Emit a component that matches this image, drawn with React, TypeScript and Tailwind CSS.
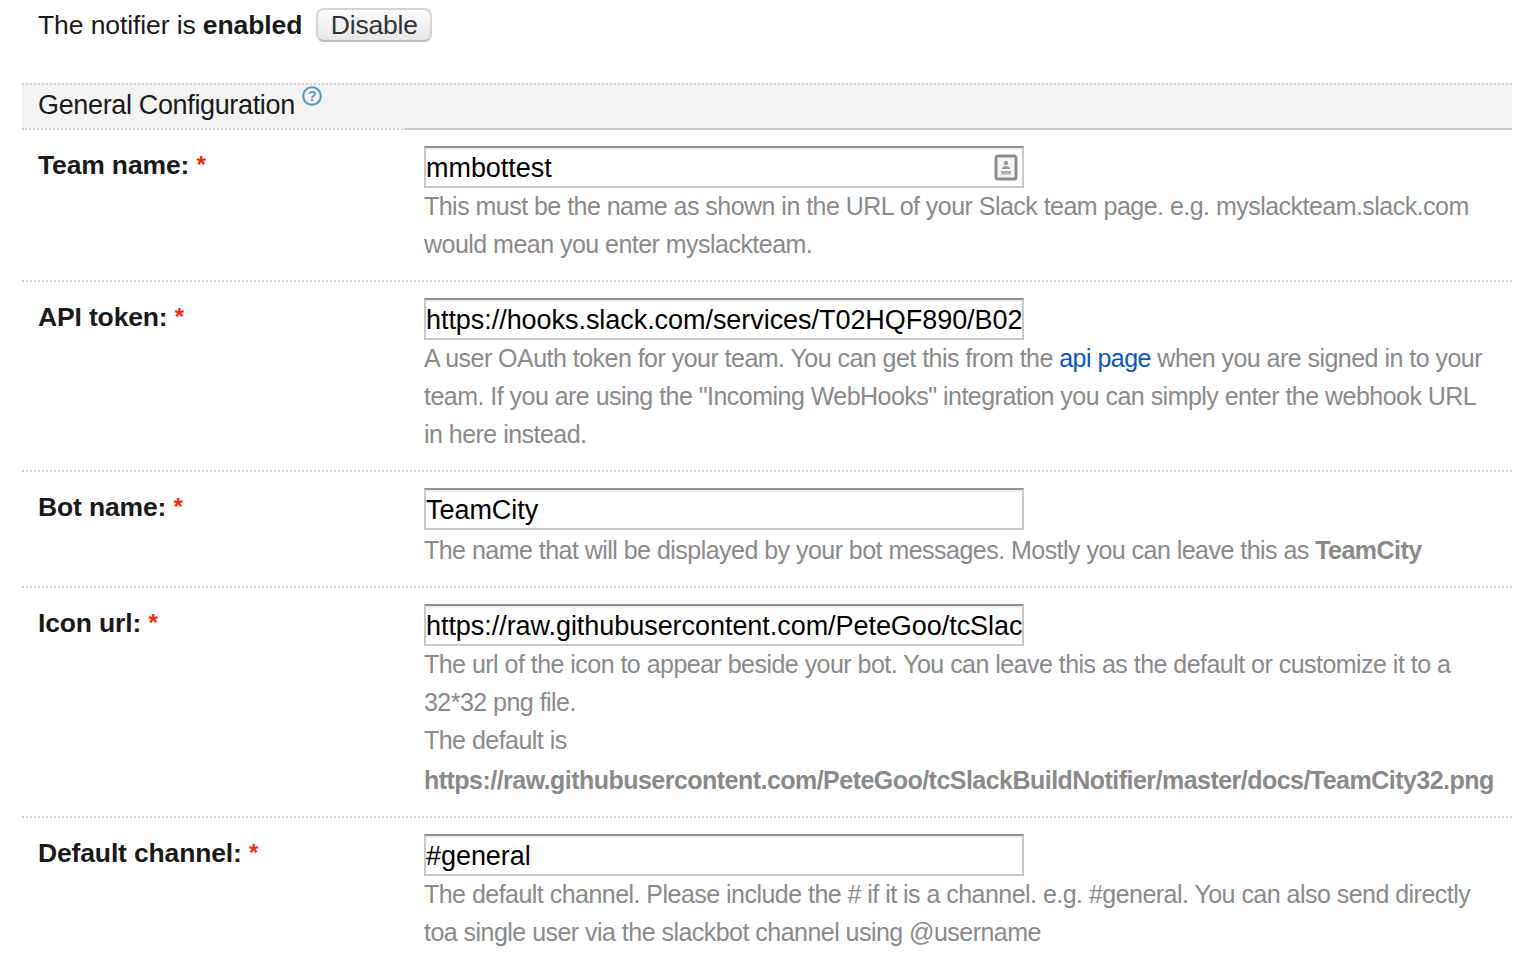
const FONT = "font-['Liberation_Sans',Arial,sans-serif]";

function ContactIcon() {
  return (
    <svg width="24" height="28" viewBox="0 0 24 28" className="absolute right-1 top-1.5">
      <rect x="2" y="2" width="20" height="23" rx="2" fill="#f4f4f4" stroke="#8c8c8c" strokeWidth="3" />
      <circle cx="12" cy="9" r="2.2" fill="#9a9a9a" />
      <path d="M8 15c0-2 2-3 4-3s4 1 4 3z" fill="#9a9a9a" />
      <rect x="7" y="17" width="10" height="3.5" fill="#b0b0b0" />
    </svg>
  );
}

function Field({
  label,
  value,
  icon,
  className,
  hintClass = "-mt-px",
  children,
}: {
  label: string;
  value: string;
  icon?: boolean;
  className: string;
  hintClass?: string;
  children: React.ReactNode;
}) {
  return (
    <div className={`flex border-b-2 border-dotted border-[#cfcfcf] ${className}`}>
      <div className="w-[402px] shrink-0 pl-4 pt-[18px] text-[26.5px] leading-[34px] font-bold tracking-[-0.15px] text-[#1a1a1a]">
        {label} <span className="align-[1px] text-[24px] text-[#f02a10]">*</span>
      </div>
      <div className="min-w-0 flex-1 pt-4">
        <div className="relative h-[42px] w-[600px] overflow-hidden border-2 border-[#c9c9c9] border-t-[#8f8f8f] bg-white text-[27px] leading-[40px] tracking-[-0.05px] whitespace-nowrap text-black shadow-[inset_0_2px_2px_#eeeeee]">
          {value}
          {icon && <ContactIcon />}
        </div>
        <div className={`pr-4 text-[25px] leading-[38px] tracking-[-0.53px] text-[#8a8a8a] ${hintClass}`}>{children}</div>
      </div>
    </div>
  );
}

export default function App() {
  return (
    <div className={`h-[954px] w-[1532px] overflow-hidden bg-white ${FONT}`}>
      <div className="flex h-[83px] items-start gap-[14px] pt-2 pl-[38px] text-[26.5px] tracking-[-0.1px] text-[#1a1a1a]">
        <div className="leading-[34px]">
          The notifier is <b>enabled</b>
        </div>
        <button className="h-[34px] w-[116px] rounded-lg border-2 border-[#d4d4d4] border-b-[#bcbcbc] bg-gradient-to-b from-[#fbfbfb] to-[#e8e8e8] text-[26.5px] leading-[30px] tracking-[-0.2px] text-[#333333]">
          Disable
        </button>
      </div>

      <div className="mr-5 ml-[22px]">
        <div className="relative h-[45px] border-t-2 border-dotted border-[#cfcfcf] bg-[#f4f4f4] pt-[3px] pl-4 text-[27px] leading-[34px] tracking-[-0.35px] text-[#1a1a1a]">
          General Configuration
          <svg width="22" height="22" viewBox="0 0 22 22" className="absolute top-0 left-[279px]">
            <circle cx="11" cy="11" r="8.8" fill="none" stroke="#5a96b8" strokeWidth="2" />
            <text x="11" y="16" textAnchor="middle" fontSize="14" fontWeight="700" fill="#5a96b8" fontFamily="Liberation Sans">
              ?
            </text>
          </svg>
          <div className="absolute right-0 -bottom-0.5 left-0 flex">
            <div className="h-0.5 w-[384px] border-b-2 border-dotted border-[#cfcfcf]" />
            <div className="h-0.5 flex-1 bg-[#c8c8c8]" />
          </div>
        </div>

        <Field label="Team name:" value="mmbottest" icon className="h-[154px] pt-0.5">
          This must be the name as shown in the URL of your Slack team page. e.g. myslackteam.slack.com would mean you enter myslackteam.
        </Field>

        <Field label="API token:" value="https://hooks.slack.com/services/T02HQF890/B02HQF890xYz" className="h-[190px]">
          A user OAuth token for your team. You can get this from the <span className="text-[#0b56c0]">api page</span> when you are signed in to your team. If you are using the "Incoming WebHooks" integration you can simply enter the webhook URL in here instead.
        </Field>

        <Field label="Bot name:" value="TeamCity" className="h-[116px]" hintClass="mt-px">
          The name that will be displayed by your bot messages. Mostly you can leave this as <b>TeamCity</b>
        </Field>

        <Field label="Icon url:" value="https://raw.githubusercontent.com/PeteGoo/tcSlackBuildNotifier" className="h-[230px]">
          The url of the icon to appear beside your bot. You can leave this as the default or customize it to a 32*32 png file.
          <br />
          The default is
          <br />
          <b className="inline-block pt-0.5 whitespace-nowrap">https://raw.githubusercontent.com/PeteGoo/tcSlackBuildNotifier/master/docs/TeamCity32.png</b>
        </Field>

        <div className="[&>div]:border-b-0">
          <Field label="Default channel:" value="#general" className="h-[137px]">
            The default channel. Please include the # if it is a channel. e.g. #general. You can also send directly toa single user via the slackbot channel using @username
          </Field>
        </div>
      </div>
    </div>
  );
}
